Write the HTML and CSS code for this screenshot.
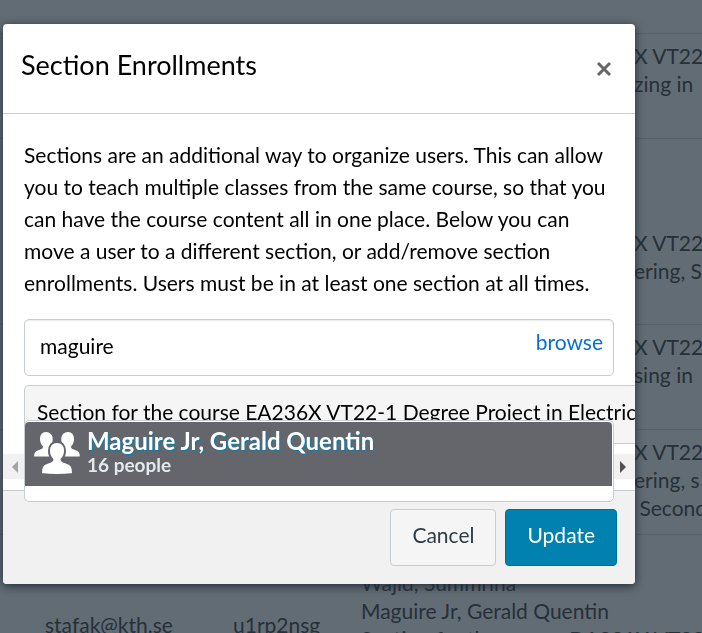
FILE: index.html
```html
<!DOCTYPE html>
<html lang="en">
<head>
<meta charset="utf-8">
<title>Section Enrollments</title>
<link rel="stylesheet" href="styles.css">
</head>
<body>
<table class="people">
  <colgroup><col class="col-login"><col class="col-sis"><col></colgroup>
  <tbody>
    <tr><td class="edge" colspan="3">X VT22<br>zing in</td></tr>
    <tr class="tall"><td class="edge" colspan="3">X VT22<br>ering, S</td></tr>
    <tr><td class="edge" colspan="3">X VT22<br>sing in</td></tr>
    <tr><td class="edge" colspan="3">X VT22<br>ering, s<br>&nbsp;Second</td></tr>
    <tr class="user">
      <td class="login">stafak@kth.se</td>
      <td class="sis">u1rp2nsg</td>
      <td class="sections">Wajid, Summrina<br>Maguire Jr, Gerald Quentin<br>Section for the course DA231X VT22-1</td>
    </tr>
  </tbody>
</table>

<div class="overlay">
  <section class="dialog" role="dialog" aria-labelledby="dialog-title">
    <header class="dialog-header">
      <h1 id="dialog-title">Section Enrollments</h1>
      <button class="close" type="button" aria-label="Close">
        <svg width="16" height="16" viewBox="0 0 16 16"><path d="M2 2 14 14M14 2 2 14"/></svg>
      </button>
    </header>
    <div class="dialog-body">
      <p class="intro">Sections are an additional way to organize users. This can allow you to teach multiple classes from the same course, so that you can have the course content all in one place. Below you can move a user to a different section, or add/remove section enrollments. Users must be in at least one section at all times.</p>
      <div class="search">
        <input type="text" value="maguire" aria-label="Search sections">
        <a href="#browse">browse</a>
      </div>
      <div class="results">
        <ul class="chosen">
          <li>Section for the course EA236X VT22-1 Degree Project in Electrical Engineering</li>
        </ul>
        <div class="scrollbar">
          <svg width="8" height="12" viewBox="0 0 8 12"><path fill="#a3a3a3" d="M7 0v12L1 6z"/></svg>
          <svg width="8" height="12" viewBox="0 0 8 12"><path fill="#505050" d="M1 0v12L7 6z"/></svg>
        </div>
        <div class="menu">
          <button class="option" type="button">
            <svg class="group" width="46" height="46" viewBox="0 0 46 46">
              <g fill="#fff">
                <path d="M12 3c-4 0-6 3-6 7 0 3.500 1.500 6 3 7.500 0 2-1 2.500-4 3.500-4 1.300-4.800 3-4.800 6.500h22V21c-3-1-6-1.500-6-3.500 1.500-1.500 2.500-4 2.500-7.500C18.700 6 16 3 12 3z"/>
                <path d="M34 3c4 0 6 3 6 7 0 3.500-1.500 6-3 7.500 0 2 1 2.500 4 3.500 4 1.300 4.800 3 4.800 6.500h-22V21c3-1 6-1.500 6-3.500-1.500-1.500-2.500-4-2.500-7.500C27.300 6 30 3 34 3z"/>
              </g>
              <path fill="#fff" stroke="#65666b" stroke-width="2" d="M23 13c-5.500 0-8 4-8 9 0 4 1.500 6.500 3.500 8.500 0 1.500-1 2-4.500 3-5 1.500-7 3-7 11.500 10 1.200 22 1.200 32 0 0-8.500-2-10-7-11.500-3.500-1-4.500-1.500-4.500-3 2-2 3.500-4.500 3.500-8.500 0-5-2.500-9-8-9z"/>
            </svg>
            <span class="label">
              <b>Maguire Jr, Gerald Quentin</b>
              <span class="count">16 people</span>
            </span>
          </button>
        </div>
      </div>
    </div>
    <footer class="dialog-footer">
      <button class="btn" type="button">Cancel</button>
      <button class="btn primary" type="button">Update</button>
    </footer>
  </section>
</div>
</body>
</html>
```
FILE: styles.css
```css
* { box-sizing: border-box; }

html, body { height: 100%; }

body {
  margin: 0;
  overflow: hidden;
  background: #626c75;
  color: #263039;
  font: 21px/28px Lato, sans-serif;
}

button, input { font: inherit; }

/* Enrollment table behind the dialog */
.people {
  width: 100%;
  margin-top: 33px;
  border-collapse: separate;
  border-spacing: 0;
  table-layout: fixed;
  white-space: nowrap;
}

.col-login { width: 233px; }
.col-sis { width: 128px; }

.people td {
  height: 105px;
  padding: 8px 0 0;
  border-top: 1px solid #56616a;
  overflow: hidden;
  vertical-align: top;
}

.people .edge { padding-left: 634px; }
.people .tall td { height: 186px; padding-top: 90px; }
.people .user td { padding-top: 34px; }
.people .user .login { padding: 76px 0 0 45px; }
.people .user .sis { padding-top: 76px; }

/* Dialog */
.overlay {
  position: fixed;
  inset: 0;
  padding: 24px 67px 0 3px;
}

.dialog {
  border-radius: 4px;
  background: #fff;
  color: #000;
  box-shadow: 0 2px 10px #1f2d36;
}

.dialog-header {
  display: flex;
  justify-content: space-between;
  padding: 23px 21px 0 18px;
  height: 90px;
  border-bottom: 1px solid #c7cdd1;
}

h1 {
  margin: 0;
  font-size: 27px;
  line-height: 36px;
  font-weight: 400;
}

.close {
  display: flex;
  align-self: flex-start;
  margin-top: 12px;
  padding: 2px;
  border: 0;
  background: none;
}

.close path { stroke: #666; stroke-width: 3; }

.dialog-body { padding: 25px 21px 0; }

.intro {
  margin: 0 0 20px;
  line-height: 32px;
}

.search {
  display: flex;
  height: 57px;
  padding: 0 10px 0 15px;
  border: 1px solid #c7cdd1;
  border-radius: 5px;
  box-shadow: inset 0 1px 2px #e6e8ea;
}

.search input {
  flex: 1;
  min-width: 0;
  padding: 0 0 3px;
  border: 0;
  outline: 0;
  background: none;
  color: #000;
}

.search a {
  padding-top: 8px;
  color: #0770cf;
  text-decoration: none;
}

.results {
  position: relative;
  margin: 9px -21px 0;
}

.chosen {
  margin: 0;
  padding: 0 0 0 21px;
  overflow: hidden;
  list-style: none;
}

.chosen li {
  height: 59px;
  padding: 12px;
  border: 1px solid #c7cdd1;
  border-right: 0;
  border-radius: 5px 0 0 5px;
  background: #f5f5f5;
  white-space: nowrap;
}

.scrollbar {
  display: flex;
  align-items: center;
  justify-content: space-between;
  height: 25px;
  margin: 10px 0 11px;
  padding: 0 8px;
  background: #f1f1f1;
}

.menu {
  position: absolute;
  top: 35px;
  left: 21px;
  right: 21px;
  padding: 1px 1px 15px 0;
  border: 1px solid #c7cdd1;
  border-radius: 5px;
  background: #fff;
}

.option {
  display: flex;
  gap: 7px;
  width: 100%;
  height: 64px;
  padding: 7px 9px;
  border: 0;
  border-radius: 4px 4px 0 0;
  background: #65666b;
  color: #fff;
  text-align: left;
}

.label { display: grid; align-content: start; }

.label b {
  font-size: 24px;
  line-height: 24px;
  text-shadow: 1px 1px 1px #0081b0;
}

.label .count {
  color: #e4e9eb;
  font-size: 19px;
  font-weight: 700;
  line-height: 24px;
}

.dialog-footer {
  display: flex;
  justify-content: flex-end;
  gap: 9px;
  padding: 18px;
  border-top: 1px solid #c7cdd1;
  border-radius: 0 0 4px 4px;
  background: #f1f1f1;
}

.btn {
  height: 57px;
  padding: 0 21px 5px;
  border: 1px solid #c7cdd1;
  border-radius: 4px;
  background: #f5f5f5;
  color: #2d3b45;
}

.btn.primary {
  border-color: #006f97;
  background: #0081b0;
  color: #fff;
}
```
